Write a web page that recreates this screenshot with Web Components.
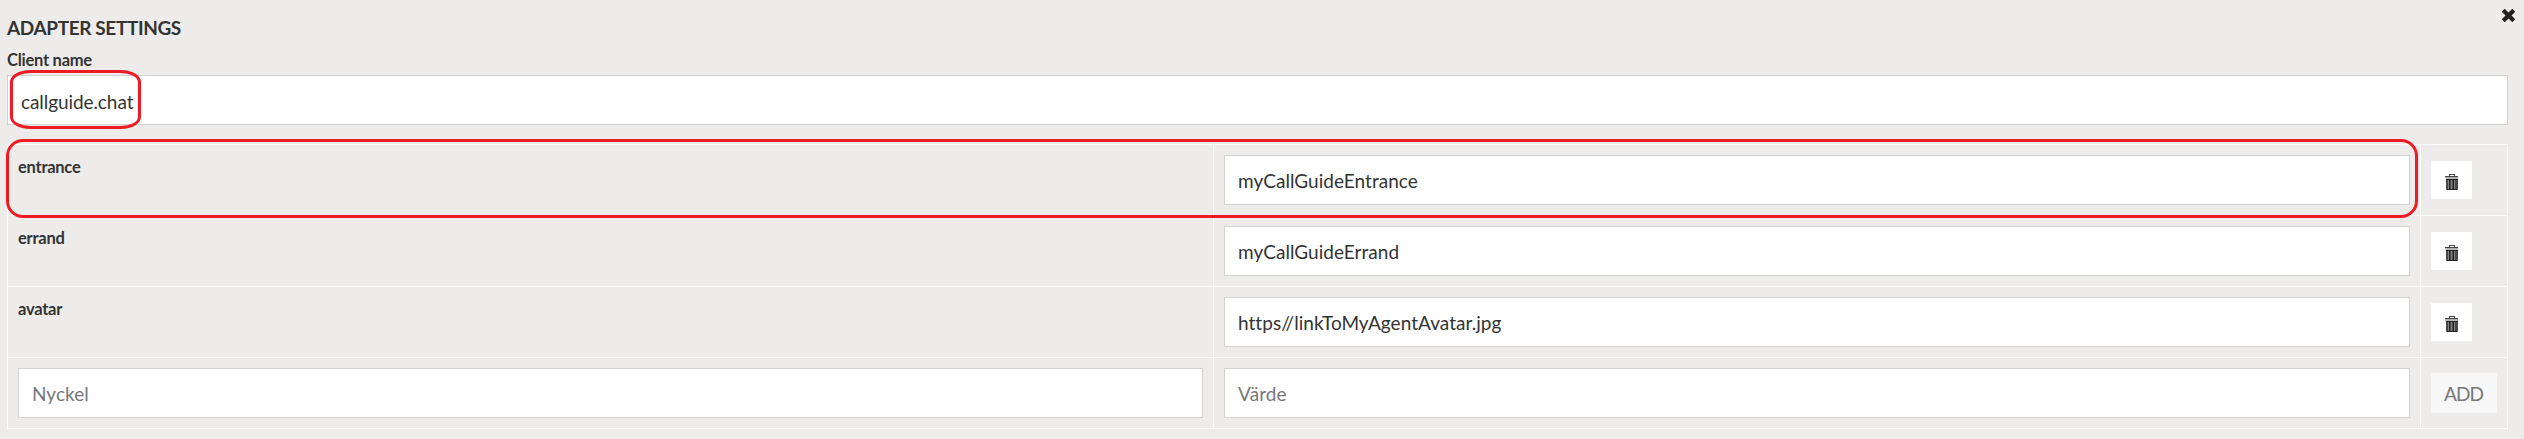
<!DOCTYPE html>
<html lang="sv"><head><meta charset="utf-8"><title>Adapter settings</title>
<style>html,body{margin:0;height:439px;overflow:hidden;background:#edecea}</style></head><body>
<adapter-settings></adapter-settings>
<script>
const define=(name,html)=>customElements.define(name,class extends HTMLElement{
  constructor(){super();this.attachShadow({mode:'open'}).innerHTML=html;}
});
define('text-field',`<style>
:host{display:flex;align-items:center;box-sizing:border-box;height:50px;border:1px solid #d2d2d2;background:#fff;padding:0 13px;font-size:19px;line-height:26px;color:#333;white-space:nowrap;letter-spacing:.04px}
:host([empty]){color:#777}
span{display:block;padding-top:var(--drop,2px)}
</style><span><slot></slot></span>`);
define('close-icon',`<style>:host{display:block;width:13px;height:13px}svg{display:block}</style>
<svg width="13" height="13" viewBox="0 0 13 13"><path d="M2.7 2.7 10.3 10.3M10.3 2.7 2.7 10.3" stroke="#222" stroke-width="4.2" stroke-linecap="square" fill="none"/></svg>`);
define('trash-button',`<style>:host{display:block;width:41px;height:38px;background:#fff}svg{display:block}</style>
<svg width="41" height="38" viewBox="0 0 41 38"><path d="M18.5 16v-2.5h5V16" fill="none" stroke="#444" stroke-width="1.1"/><path d="M14 15h13v1.2H14z" fill="#444"/><path d="M14.5 16.2h12.5v1.6H14.5z" fill="#a5a5a5"/><path d="M15 18h12v10q0 1-1 1H16q-1 0-1-1z" fill="#484848"/><path d="M15 18h12v1H15zM16 28h10v1H16z" fill="#222"/><path d="M17.5 19V28M20.5 19V28M23.5 19V28" stroke="#858585"/><path d="M18.5 19V28M22.5 19V28" stroke="#222"/></svg>`);
define('add-button',`<style>:host{display:flex;align-items:center;justify-content:center;width:66px;height:40px;background:#f7f7f7;color:#777;font-size:19px;line-height:26px;letter-spacing:-1px}span{padding:1px 1px 0 0}</style><span><slot></slot></span>`);
define('setting-row',`<style>
:host{display:grid;grid-template-columns:1206px 1207px 87px;height:71px;box-sizing:border-box;border-bottom:1px solid #fff}
div{box-sizing:border-box;border-right:1px solid #fff;padding:10px}
.a{display:flex;align-items:center;padding:0 0 0 10px}
</style><div><slot name="key"></slot></div><div><slot></slot></div><div class="a"><slot name="action"></slot></div>`);
define('key-label',`<style>:host{display:block;font-size:16.5px;font-weight:700;line-height:25px;color:#333;letter-spacing:-.25px}</style><span><slot></slot></span>`);
define('red-mark',`<style>:host{position:absolute;box-sizing:border-box;border:3px solid #ed1c24;pointer-events:none}</style>`);
define('adapter-settings',`<style>
:host{display:block;position:relative;box-sizing:border-box;width:2524px;height:439px;padding:0 16px 0 7px;background:#edecea;font-family:Lato,sans-serif;color:#333}
header{display:flex;justify-content:space-between;height:48px}
h1{margin:14px 0 0;font-size:19px;line-height:27px;font-weight:700;white-space:nowrap;letter-spacing:-.38px}
close-icon{margin:9px -7px 0 0}
key-label.n{height:27px}
.client{--drop:4px;letter-spacing:-.08px}
main{margin-top:19px;box-sizing:border-box;border:solid #fff;border-width:1px 0 0 1px;width:2501px}
setting-row{width:2500px}
.m1{left:10px;top:70px;width:131px;height:59px;border-radius:20px/12px}
.m2{left:6px;top:139px;width:2412px;height:79px;border-radius:17px}
</style>
<header><h1>ADAPTER SETTINGS</h1><close-icon></close-icon></header>
<key-label class="n">Client name</key-label>
<text-field class="client">callguide.chat</text-field>
<main>
<setting-row><key-label slot="key">entrance</key-label><text-field>myCallGuideEntrance</text-field><trash-button slot="action"></trash-button></setting-row>
<setting-row><key-label slot="key">errand</key-label><text-field>myCallGuideErrand</text-field><trash-button slot="action"></trash-button></setting-row>
<setting-row><key-label slot="key">avatar</key-label><text-field>https//linkToMyAgentAvatar.jpg</text-field><trash-button slot="action"></trash-button></setting-row>
<setting-row><text-field slot="key" empty>Nyckel</text-field><text-field empty>Värde</text-field><add-button slot="action">ADD</add-button></setting-row>
</main>
<red-mark class="m1"></red-mark><red-mark class="m2"></red-mark>`);
</script></body></html>
